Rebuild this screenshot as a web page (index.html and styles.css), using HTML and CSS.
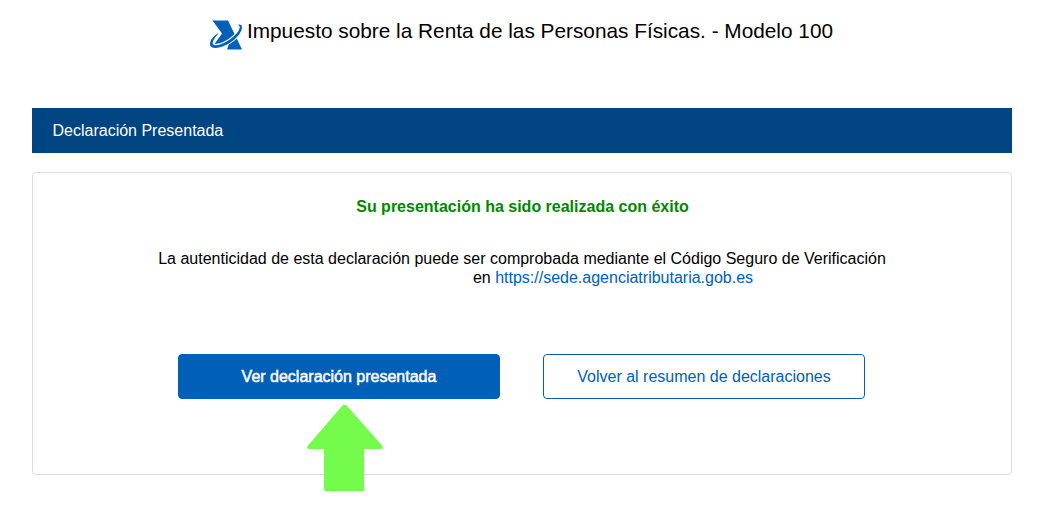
FILE: index.html
```html
<!DOCTYPE html>
<html lang="es">

<head>
    <meta charset="UTF-8">
    <meta name="viewport" content="width=device-width, initial-scale=1.0">
    <title>Declaración Presentada</title>
    <link rel="stylesheet" href="styles.css">
</head>

<body>
    <header class="cabecera">
        <svg class="logo" viewBox="0 0 32 30" width="32" height="30">
            <path class="logo-fondo" d="M2.500 0.500H18L32 29.500H17L20 21L13 23.500L4.500 24L12 13.500Z"/>
            <path class="logo-hueco" d="M9 14C2 19 1 24 3 25.500C7 28 18 24 26 16C31 10 32 5 28 5"/>
            <path class="logo-azul" d="M9 13C1 17 -1 23 0.500 26C3 30.500 17 27 26 18C32 12 33 6 31 5C30 4 28.500 4.500 27.500 5C30.500 5 30.500 8.500 27 13C20 21 9 26.500 4 25C1 24 3.500 18.500 9 13Z"/>
        </svg>
        <h1 class="titulo">Impuesto sobre la Renta de las Personas Físicas. - Modelo 100</h1>
    </header>

    <main class="contenido">
        <h2 class="barra">Declaración Presentada</h2>

        <section class="panel">
            <p class="exito">Su presentación ha sido realizada con éxito</p>
            <p class="texto">
                La autenticidad de esta declaración puede ser comprobada mediante el Código Seguro de Verificación
                <span class="enlace-sede">en <a href="#">https://sede.agenciatributaria.gob.es</a></span>
            </p>
            <div class="botones">
                <div class="destacado">
                    <button class="boton principal">Ver declaración presentada</button>
                    <svg class="flecha" viewBox="0 0 76 87" width="76" height="87">
                        <path d="M35 2Q37.500 -0.500 40 2L75 41.500Q77 45 73 45H57V87H19Q17 87 17 85V45H2Q-1 45 1 41.500Z"/>
                    </svg>
                </div>
                <button class="boton">Volver al resumen de declaraciones</button>
            </div>
        </section>
    </main>
</body>

</html>
```
FILE: styles.css
```css
body {
    font-family: "Liberation Sans", Arial, sans-serif;
    font-size: 16px;
    color: #000;
    margin: 0;
    min-height: 516px;
    background-color: #fff;
}

.cabecera {
    display: flex;
    justify-content: center;
    gap: 5px;
    height: 88px;
    padding-top: 20px;
    padding-right: 2px;
}

.logo-fondo,
.logo-azul {
    fill: #0060b8;
}

.logo-hueco {
    fill: none;
    stroke: #fff;
    stroke-width: 4.6;
}

.titulo {
    margin: 0;
    font-size: 20.8px;
    font-weight: normal;
    line-height: 21px;
    white-space: nowrap;
}

.contenido {
    margin: 0 33px 0 32px;
}

.barra {
    margin: 0 0 19px;
    padding-left: 20.5px;
    background-color: #004481;
    color: #fff;
    font-size: 16px;
    font-weight: normal;
    line-height: 45px;
}

.panel {
    box-sizing: border-box;
    height: 303px;
    padding-top: 24px;
    border: 1px solid #ddd;
    border-radius: 4px;
    text-align: center;
}

.exito {
    margin: 0 0 33px;
    padding-left: 1px;
    color: #008800;
    font-weight: bold;
    line-height: 19px;
}

.texto {
    margin: 0 0 67px;
    line-height: 19px;
}

.enlace-sede {
    display: block;
    padding-left: 182px;
}

.enlace-sede a {
    color: #0060b8;
    text-decoration: none;
}

.botones {
    display: flex;
    justify-content: center;
    gap: 43px;
    padding-right: 2px;
}

.destacado {
    position: relative;
}

.boton {
    box-sizing: border-box;
    width: 322px;
    height: 45px;
    padding: 0 0 0 1px;
    border: 1px solid #0060b8;
    border-radius: 4px;
    background-color: #fff;
    color: #0060b8;
    font-family: inherit;
    font-size: 16px;
}

.principal {
    background-color: #0060b8;
    color: #fff;
    -webkit-text-stroke: 0.5px #fff;
}

/* Flecha verde bajo el botón principal */
.flecha {
    position: absolute;
    top: 50px;
    left: 129px;
    fill: #75fb4c;
}
```
